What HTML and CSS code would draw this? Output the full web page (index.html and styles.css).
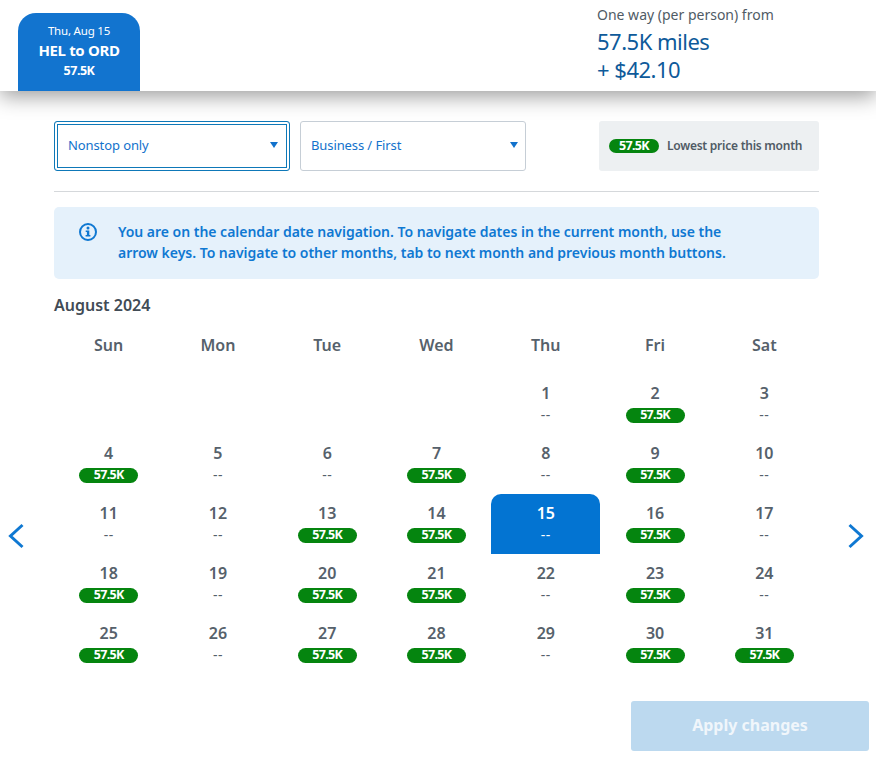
FILE: index.html
```html
<!DOCTYPE html>
<html lang="en">

<head>
    <meta charset="UTF-8">
    <meta name="viewport" content="width=device-width, initial-scale=1.0">
    <title>Choose dates</title>
    <link rel="stylesheet" href="styles.css">
</head>

<body>
    <header class="header">
        <div class="trip-tab">
            <div class="trip-date">Thu, Aug 15</div>
            <div class="trip-route">HEL to ORD</div>
            <div class="trip-price">57.5K</div>
        </div>
        <div class="fare">
            <div class="fare-label">One way (per person) from</div>
            <div class="fare-value">57.5K miles</div>
            <div class="fare-value">+ $42.10</div>
        </div>
    </header>

    <main class="main">
        <div class="filters">
            <div class="select select-stops select-focus">
                <span>Nonstop only</span>
                <span class="caret"></span>
            </div>
            <div class="select select-cabin">
                <span>Business / First</span>
                <span class="caret"></span>
            </div>
            <div class="legend">
                <span class="pill legend-pill">57.5K</span>
                <span>Lowest price this month</span>
            </div>
        </div>

        <div class="alert">
            <svg class="alert-icon" width="20" height="20" viewBox="0 0 20 20">
                <circle cx="10" cy="10" r="8" fill="none" stroke="#0f78d2" stroke-width="2" />
                <circle cx="10" cy="6" r="1.5" fill="#0f78d2" />
                <path d="M7.700 8.500h3.600v4.500h1.100v1.600H7.600V13h1.300v-3H7.700z" fill="#0f78d2" />
            </svg>
            <p>You are on the calendar date navigation. To navigate dates in the current month, use the arrow keys. To navigate to other months, tab to next month and previous month buttons.</p>
        </div>

        <h2 class="month">August 2024</h2>

        <div class="weekdays">
            <div>Sun</div>
            <div>Mon</div>
            <div>Tue</div>
            <div>Wed</div>
            <div>Thu</div>
            <div>Fri</div>
            <div>Sat</div>
        </div>

        <div class="days">
            <div class="day first-day"><b>1</b><span class="none">--</span></div>
            <div class="day"><b>2</b><span class="pill">57.5K</span></div>
            <div class="day"><b>3</b><span class="none">--</span></div>
            <div class="day"><b>4</b><span class="pill">57.5K</span></div>
            <div class="day"><b>5</b><span class="none">--</span></div>
            <div class="day"><b>6</b><span class="none">--</span></div>
            <div class="day"><b>7</b><span class="pill">57.5K</span></div>
            <div class="day"><b>8</b><span class="none">--</span></div>
            <div class="day"><b>9</b><span class="pill">57.5K</span></div>
            <div class="day"><b>10</b><span class="none">--</span></div>
            <div class="day"><b>11</b><span class="none">--</span></div>
            <div class="day"><b>12</b><span class="none">--</span></div>
            <div class="day"><b>13</b><span class="pill">57.5K</span></div>
            <div class="day"><b>14</b><span class="pill">57.5K</span></div>
            <div class="day day-selected"><b>15</b><span class="none">--</span></div>
            <div class="day"><b>16</b><span class="pill">57.5K</span></div>
            <div class="day"><b>17</b><span class="none">--</span></div>
            <div class="day"><b>18</b><span class="pill">57.5K</span></div>
            <div class="day"><b>19</b><span class="none">--</span></div>
            <div class="day"><b>20</b><span class="pill">57.5K</span></div>
            <div class="day"><b>21</b><span class="pill">57.5K</span></div>
            <div class="day"><b>22</b><span class="none">--</span></div>
            <div class="day"><b>23</b><span class="pill">57.5K</span></div>
            <div class="day"><b>24</b><span class="none">--</span></div>
            <div class="day"><b>25</b><span class="pill">57.5K</span></div>
            <div class="day"><b>26</b><span class="none">--</span></div>
            <div class="day"><b>27</b><span class="pill">57.5K</span></div>
            <div class="day"><b>28</b><span class="pill">57.5K</span></div>
            <div class="day"><b>29</b><span class="none">--</span></div>
            <div class="day"><b>30</b><span class="pill">57.5K</span></div>
            <div class="day"><b>31</b><span class="pill">57.5K</span></div>
        </div>

        <div class="actions">
            <button class="apply" disabled>Apply changes</button>
        </div>
    </main>

    <svg class="arrow arrow-prev" width="18" height="26" viewBox="0 0 18 26">
        <path d="M15.500 2 3.500 13l12 11" fill="none" stroke="#0f78d2" stroke-width="3" />
    </svg>
    <svg class="arrow arrow-next" width="18" height="26" viewBox="0 0 18 26">
        <path d="M2.500 2 14.500 13 2.500 24" fill="none" stroke="#0f78d2" stroke-width="3" />
    </svg>
</body>

</html>
```

FILE: styles.css
```css
body {
    margin: 0;
    height: 757px;
    overflow: hidden;
    position: relative;
    background-color: white;
    font-family: "Noto Sans", "Open Sans", sans-serif;
    color: #505b65;
}

.header {
    height: 91px;
    display: flex;
    justify-content: space-between;
    background-color: white;
    box-shadow: 0 5px 20px rgba(0, 0, 0, 0.4);
}

.trip-tab {
    width: 122px;
    height: 78px;
    margin: 13px 0 0 18px;
    box-sizing: border-box;
    padding-top: 10px;
    background-color: #1274cf;
    border-radius: 18px 18px 0 0;
    color: white;
    text-align: center;
}

.trip-date {
    font-size: 11.500px;
    line-height: 16px;
    letter-spacing: -0.2px;
}

.trip-route {
    font-size: 15px;
    font-weight: 700;
    line-height: 22px;
    letter-spacing: -0.35px;
}

.trip-price {
    font-size: 12.500px;
    font-weight: 700;
    line-height: 20px;
    letter-spacing: -0.5px;
}

.fare {
    width: 279px;
    padding-top: 5px;
}

.fare-label {
    font-size: 14px;
    line-height: 20px;
    margin-bottom: 2px;
}

.fare-value {
    font-size: 22px;
    line-height: 28px;
    color: #0e5a9a;
    letter-spacing: -0.5px;
}

.main {
    width: 765px;
    margin-left: 54px;
}

.filters {
    display: flex;
    margin-top: 30px;
    padding-bottom: 20px;
    border-bottom: 1px solid #d5d8db;
}

.select {
    height: 50px;
    box-sizing: border-box;
    display: flex;
    align-items: center;
    justify-content: space-between;
    padding: 0 7px 2px 10px;
    border: 1px solid #c6ced6;
    border-radius: 3px;
    font-size: 13px;
    letter-spacing: -0.1px;
    color: #1272cc;
}

.select-stops {
    width: 236px;
    padding-left: 13px;
    padding-right: 11px;
}

.select-cabin {
    width: 226px;
    margin-left: 10px;
}

.select-focus {
    border: 1px solid #0e78b8;
    box-shadow: inset 0 0 0 2px white, inset 0 0 0 3px #0e78b8;
}

.caret {
    width: 0;
    height: 0;
    border-left: 4px solid transparent;
    border-right: 4px solid transparent;
    border-top: 6px solid #1272cc;
}

.legend {
    width: 220px;
    height: 50px;
    box-sizing: border-box;
    margin-left: auto;
    padding: 0 0 1px 10px;
    display: flex;
    align-items: center;
    gap: 8px;
    background-color: #edf0f2;
    border-radius: 3px;
    font-size: 12px;
    font-weight: 600;
    letter-spacing: -0.25px;
}

.pill {
    display: block;
    width: 59px;
    height: 15px;
    background-color: #05850f;
    border-radius: 8px;
    color: white;
    font-size: 12.500px;
    font-weight: 700;
    line-height: 13px;
    letter-spacing: -0.7px;
    text-align: center;
}

.legend-pill {
    width: 50px;
    height: 14px;
    line-height: 13px;
}

.alert {
    height: 72px;
    box-sizing: border-box;
    margin-top: 15px;
    padding: 14px 70px 0 24px;
    display: flex;
    gap: 20px;
    background-color: #e5f1fb;
    border-radius: 5px;
    color: #0f78d2;
    font-size: 14px;
    font-weight: 600;
    line-height: 21px;
    letter-spacing: -0.02px;
}

.alert p {
    margin: 0;
}

.alert-icon {
    flex: none;
    margin-top: 1px;
}

.month {
    margin: 15px 0 0;
    font-size: 16px;
    font-weight: 600;
    line-height: 22px;
    color: #414b55;
}

.weekdays,
.days {
    display: grid;
    grid-template-columns: repeat(7, 1fr);
    text-align: center;
}

.weekdays {
    margin-top: 18px;
    height: 40px;
    font-size: 16px;
    font-weight: 600;
    line-height: 22px;
    color: #56616b;
}

.days {
    grid-auto-rows: 60px;
}

.first-day {
    grid-column-start: 5;
}

.day {
    display: flex;
    flex-direction: column;
    align-items: center;
    padding-top: 8px;
    box-sizing: border-box;
}

.day b {
    height: 26px;
    font-size: 16px;
    font-weight: 600;
    line-height: 22px;
    color: #56616b;
}

.none {
    font-size: 14px;
    line-height: 13px;
    letter-spacing: 0.5px;
    color: #56616b;
}

.day-selected {
    background-color: #0374d2;
    border-radius: 10px 10px 0 0;
}

.day-selected b,
.day-selected .none {
    color: white;
}

.actions {
    display: flex;
    justify-content: flex-end;
    margin: 27px -50px 0 0;
}

.apply {
    width: 238px;
    height: 50px;
    padding-bottom: 3px;
    background-color: #bcd9ef;
    border: none;
    border-radius: 3px;
    color: #f0f6fb;
    font-family: inherit;
    font-size: 16px;
    font-weight: 700;
}

.arrow {
    position: absolute;
    top: 523px;
}

.arrow-prev {
    left: 7px;
}

.arrow-next {
    right: 11px;
}
```
